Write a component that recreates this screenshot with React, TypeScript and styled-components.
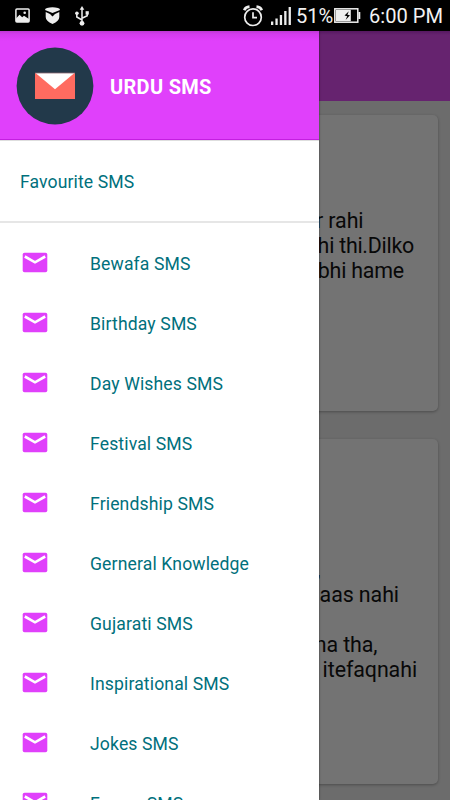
import React from "react";
import styled, { createGlobalStyle } from "styled-components";

const GlobalStyle = createGlobalStyle`
  * { box-sizing: border-box; }
  html, body { margin: 0; padding: 0; }
  body { font-family: Roboto, "Liberation Sans", sans-serif; background: #6e6e6e; overflow: hidden; }
  svg { display: block; flex: none; }
`;

const Screen = styled.div`
  width: 450px;
  height: 800px;
  display: flex;
  flex-direction: column;
  overflow: hidden;
  background: #6c6c6c;
`;

const StatusBar = styled.header`
  flex: none;
  height: 31px;
  display: flex;
  align-items: center;
  padding: 0 8px 0 15px;
  background: #000;
  color: #f2f2f2;
`;

const Notices = styled.div`
  display: flex;
  align-items: center;
  gap: 15px;
  flex: 1;
`;

const Indicators = styled.div`
  display: flex;
  align-items: center;
`;

const Signal = styled.div`
  margin: 0 6px 0 8px;
`;

const StatusText = styled.span<{ $gap: number; $width: number }>`
  width: ${(p) => p.$width}px;
  margin-left: ${(p) => p.$gap}px;
  font-size: 20.1px;
  line-height: 31px;
  padding-top: 1px;
  white-space: nowrap;
`;

const Stage = styled.main`
  position: relative;
  flex: 1;
  overflow: hidden;
`;

const AppBar = styled.div`
  height: 70px;
  background: linear-gradient(#561861 0, #66236f 4px, #66236f 100%);
`;

const Feed = styled.div`
  display: flex;
  flex-direction: column;
  gap: 28px;
  padding: 14px 12.5px 0 12px;
`;

const Card = styled.article<{ $height: number; $top: number }>`
  height: ${(p) => p.$height}px;
  padding-top: ${(p) => p.$top}px;
  border-radius: 5px;
  background: #737373;
  box-shadow: 0 1px 3px rgba(0, 0, 0, 0.3);
`;

const Line = styled.p<{ $end: number; $tracking?: number }>`
  margin: 0;
  height: 25px;
  padding-right: ${(p) => p.$end}px;
  text-align: right;
  font-size: 21.4px;
  letter-spacing: ${(p) => p.$tracking ?? -0.08}px;
  line-height: 25px;
  color: #080808;
  white-space: pre;
`;

const Drawer = styled.aside`
  position: absolute;
  inset: 0 auto 0 0;
  width: 319px;
  background: #fff;
  box-shadow: 0 0 2px rgba(0, 0, 0, 0.55);
  overflow: hidden;
`;

const DrawerHeader = styled.div`
  height: 109px;
  display: flex;
  align-items: center;
  gap: 16px;
  padding: 1px 16px 0;
  background: linear-gradient(#bd38d3 0, #d33bee 3px, #e040fb 10px);
  border-bottom: 1px solid #c41fe0;
`;

const Title = styled.h1`
  margin: 2px 0 0;
  font-size: 20px;
  font-weight: 700;
  letter-spacing: 0.3px;
  color: #fff;
`;

const Favourite = styled.div`
  height: 83px;
  display: flex;
  align-items: center;
  padding: 2px 20px 0;
  border-top: 1px solid #dedede;
  border-bottom: 2px solid #e6e6e6;
  color: #00707c;
  font-size: 17.6px;
  letter-spacing: 0.1px;
`;

const Menu = styled.ul`
  list-style: none;
  margin: 0;
  padding: 10px 0 0;
`;

const MenuItem = styled.li`
  height: 60px;
  display: flex;
  align-items: center;
  gap: 42px;
  padding: 0 22px;
  color: #00707c;
  font-size: 17.6px;
  letter-spacing: 0.13px;
  white-space: nowrap;
`;

const Label = styled.span`
  padding-top: 2px;
  white-space: pre;
`;

const MailIcon = () => (
  <svg width="26" height="22" viewBox="0 0 26 22">
    <rect x="0.7" y="0.7" width="24.6" height="19.6" rx="1.8" fill="#e040fb" />
    <path d="M2.8 4.5 L13 10.3 L23.2 4.5" fill="none" stroke="#fff" strokeWidth="2.6" />
  </svg>
);

const Logo = () => (
  <svg width="78" height="78" viewBox="0 0 78 78">
    <circle cx="39" cy="39" r="38.4" fill="#22394a" />
    <rect x="19" y="26" width="40" height="26" fill="#ff6b60" />
    <path d="M19.5 26 H58.5 L39 42.2 Z" fill="#fff" />
    <path d="M19 26 H59" stroke="#8c6670" strokeWidth="0.8" />
  </svg>
);

const PictureIcon = () => (
  <svg width="15" height="15" viewBox="0 0 15 15">
    <rect x="0.9" y="0.9" width="13.2" height="13.2" rx="1" fill="none" stroke="#eee" strokeWidth="1.5" />
    <path d="M1 10.5 L4.5 6.8 L7.2 9.2 L9 7.8 L14 11 V14 H1 Z" fill="#eee" />
    <circle cx="9.7" cy="4.8" r="1.3" fill="#eee" />
  </svg>
);

const ShieldIcon = () => (
  <svg width="15" height="17" viewBox="0 0 15 17">
    <path d="M0 3 Q0 1.6 2 1 Q7.5 -0.6 13 1 Q15 1.6 15 3 L7.5 6 Z" fill="#eee" />
    <path d="M0.7 5 L5 6.9 L7.5 9.6 L10 6.9 L14.3 5 V10 Q14.3 14 7.5 17 Q0.7 14 0.7 10 Z" fill="#eee" />
  </svg>
);

const UsbIcon = () => (
  <svg width="14" height="20" viewBox="0 0 14 20" fill="#eee">
    <path d="M7 2.5 V17 M7 14 L1.8 11 V7.5 M7 12.3 L12.2 9.8 V7" fill="none" stroke="#eee" strokeWidth="1.5" />
    <path d="M7 0 L9.3 3.8 H4.7 Z" />
    <circle cx="1.9" cy="7.3" r="1.8" />
    <rect x="10.6" y="5.2" width="3.2" height="3.4" />
    <circle cx="7" cy="17.3" r="2.4" />
  </svg>
);

const AlarmIcon = () => (
  <svg width="20" height="22" viewBox="0 0 20 22" fill="none" stroke="#eee">
    <circle cx="10" cy="12.2" r="8.3" strokeWidth="1.7" />
    <path d="M10 7.3 V12.6 H14" strokeWidth="1.7" />
    <path d="M1.2 5.2 Q2.5 1.9 6.5 1.6 M13.5 1.6 Q17.5 1.9 18.8 5.2" strokeWidth="2.6" />
  </svg>
);

const SignalIcon = () => (
  <svg width="20" height="18" viewBox="0 0 20 18" fill="#eee">
    <rect x="0" y="14.5" width="2.3" height="3.5" />
    <rect x="4.4" y="11.5" width="2.3" height="6.5" />
    <rect x="8.8" y="8" width="2.3" height="10" />
    <rect x="13.2" y="4" width="2.3" height="14" />
    <rect x="17.6" y="0" width="2.3" height="18" />
  </svg>
);

const BatteryIcon = () => (
  <svg width="27" height="15" viewBox="0 0 27 15">
    <rect x="0.8" y="0.8" width="23" height="13.4" fill="#000" stroke="#eee" strokeWidth="1.5" />
    <rect x="1.8" y="1.8" width="15" height="11.4" fill="#eee" />
    <rect x="24.4" y="4" width="1.9" height="7" fill="#eee" />
    <path d="M14.8 3.2 L10.5 7.6 L13.2 8.2 L11.6 12 L16 7.3 L13.4 6.8 Z" fill="#000" />
  </svg>
);

type CardLine = { text: string; end: number; tracking?: number };
type CardText = { height: number; top: number; lines: CardLine[] };

const cards: CardText[] = [
  {
    height: 296,
    top: 93,
    lines: [
      { text: "r rahi", end: 74 },
      { text: "hi thi.Dilko", end: 23.5, tracking: -0.25 },
      { text: "bhi hame", end: 33.5, tracking: -0.2 },
    ],
  },
  {
    height: 345,
    top: 118,
    lines: [
      { text: ",", end: 117 },
      { text: "aas nahi", end: 38.5 },
      { text: "", end: 0 },
      { text: "na tha,", end: 60 },
      { text: "itefaqnahi", end: 20.5 },
    ],
  },
];

const categories = [
  "Bewafa SMS",
  "Birthday SMS",
  "Day Wishes SMS",
  "Festival SMS",
  "Friendship SMS",
  "Gerneral Knowledge",
  "Gujarati SMS",
  "Inspirational SMS",
  "Jokes SMS",
  "Funny  SMS",
];

export default function App() {
  return (
    <>
      <GlobalStyle />
      <Screen>
        <StatusBar>
          <Notices>
            <PictureIcon />
            <ShieldIcon />
            <UsbIcon />
          </Notices>
          <Indicators>
            <AlarmIcon />
            <Signal>
              <SignalIcon />
            </Signal>
            <StatusText $gap={-1} $width={38}>51%</StatusText>
            <BatteryIcon />
            <StatusText $gap={8} $width={73}>6:00 PM</StatusText>
          </Indicators>
        </StatusBar>
        <Stage>
          <AppBar />
          <Feed>
            {cards.map((card) => (
              <Card key={card.height} $height={card.height} $top={card.top}>
                {card.lines.map((line, i) => (
                  <Line key={i} $end={line.end} $tracking={line.tracking}>{line.text}</Line>
                ))}
              </Card>
            ))}
          </Feed>
          <Drawer>
            <DrawerHeader>
              <Logo />
              <Title>URDU SMS</Title>
            </DrawerHeader>
            <Favourite>Favourite SMS</Favourite>
            <Menu>
              {categories.map((name) => (
                <MenuItem key={name}>
                  <MailIcon />
                  <Label>{name}</Label>
                </MenuItem>
              ))}
            </Menu>
          </Drawer>
        </Stage>
      </Screen>
    </>
  );
}
